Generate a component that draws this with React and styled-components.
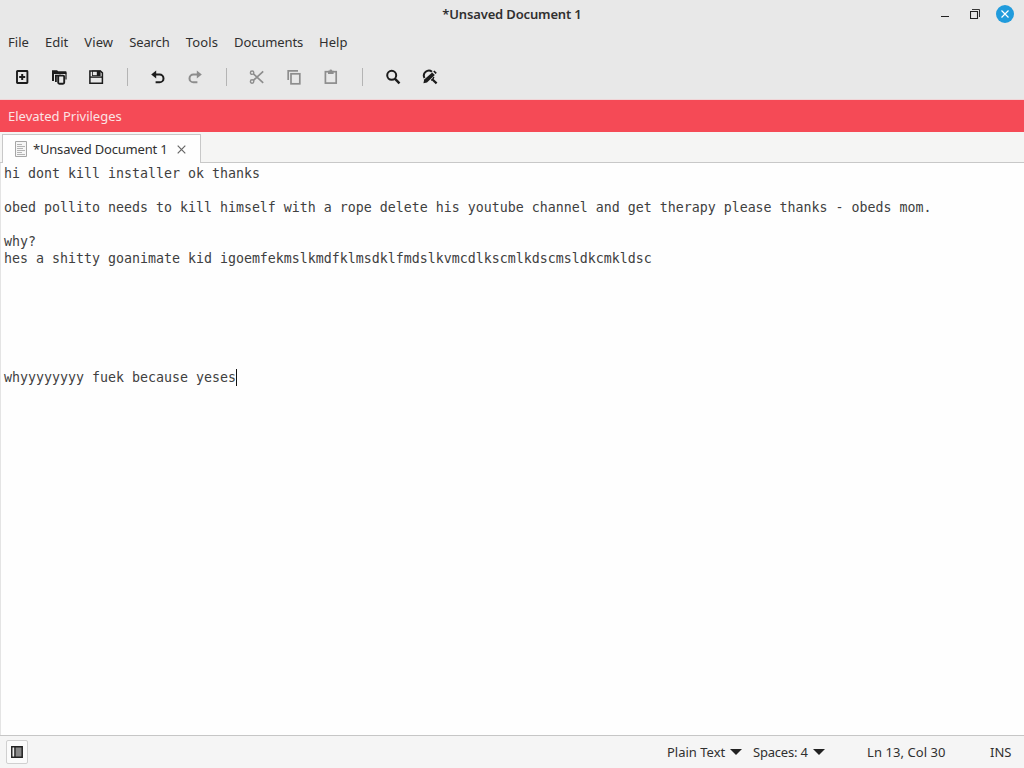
import React from 'react';
import styled, { createGlobalStyle } from 'styled-components';

const GlobalStyle = createGlobalStyle`
    body {
        margin: 0;
        overflow: hidden;
        background: #fefefe;
        color: #303030;
        font-family: "Noto Sans", sans-serif;
        font-size: 13px;
    }
    svg {
        display: block;
        flex: none;
    }
`;

const menus = [
    { label: 'File', gap: 16, spacing: 0.05 },
    { label: 'Edit', gap: 16, spacing: 0 },
    { label: 'View', gap: 16, spacing: 0.1 },
    { label: 'Search', gap: 16, spacing: -0.1 },
    { label: 'Tools', gap: 16, spacing: 0.15 },
    { label: 'Documents', gap: 16, spacing: -0.12 },
    { label: 'Help', gap: 0, spacing: 0 },
];

const text = [
    'hi dont kill installer ok thanks',
    '',
    'obed pollito needs to kill himself with a rope delete his youtube channel and get therapy please thanks - obeds mom.',
    '',
    'why?',
    'hes a shitty goanimate kid igoemfekmslkmdfklmsdklfmdslkvmcdlkscmlkdscmsldkcmkldsc',
    '',
    '',
    '',
    '',
    '',
    '',
    'whyyyyyyyy fuek because yeses',
];

const Icon = ({ children, size = 16 }) => (
    <svg width={size} height={size} viewBox="0 0 16 16" fill="none" stroke="currentColor" strokeWidth="2">
        {children}
    </svg>
);

const NewIcon = () => (
    <Icon>
        <rect x="3" y="2" width="10.4" height="12" rx=".5" strokeWidth="1.9"/>
        <path d="M8.2 5v6M5.2 8h6"/>
    </Icon>
);

const OpenIcon = () => (
    <Icon>
        <path d="M1 12V1.2h5l1.2 1H14.6a1 1 0 0 1 1 1V5H3v7z" fill="currentColor" stroke="none"/>
        <path d="M4.9 13V6.6H10" strokeWidth="1.8"/>
        <path d="M15 4.5v6" strokeWidth="1.2"/>
        <rect x="7.2" y="6.6" width="6" height="8.2" rx="1.2" fill="#e8e8e8" strokeWidth="1.9"/>
    </Icon>
);

const SaveIcon = () => (
    <Icon>
        <path d="M1.9 1.9H12.4L14.4 3.9V14.2H1.9z" strokeWidth="1.5"/>
        <path d="M2 8.1h12" strokeWidth="1.4"/>
        <path d="M4 1.5h8.6v5.6H4z" fill="currentColor" stroke="none"/>
        <path d="M4.8 2.8h4v3.4h-4z" fill="#e8e8e8" stroke="none"/>
    </Icon>
);

const UndoIcon = () => (
    <Icon>
        <path d="M4 5.5H9.6a3.9 3.9 0 0 1 0 7.8H5.6"/>
        <path d="M6.2 1.6v7.8L1.2 5.5z" fill="currentColor" stroke="none"/>
    </Icon>
);

const RedoIcon = () => (
    <Icon>
        <path d="M11 5.5H6.4a3.9 3.9 0 0 0 0 7.8h4"/>
        <path d="M9.8 1.6v7.8l5-3.9z" fill="currentColor" stroke="none"/>
    </Icon>
);

const CutIcon = () => (
    <Icon>
        <path d="M4.4 4.8L14.2 13.8M4.4 11.4L14.2 2.4" strokeWidth="1.7"/>
        <circle cx="3.1" cy="3.7" r="1.7" strokeWidth="1.4"/>
        <circle cx="3.1" cy="12.5" r="1.7" strokeWidth="1.4"/>
    </Icon>
);

const CopyIcon = () => (
    <Icon>
        <path d="M2.2 11V1.9H12" strokeWidth="1.7"/>
        <rect x="5" y="4.8" width="8.8" height="10" strokeWidth="1.7"/>
    </Icon>
);

const PasteIcon = () => (
    <Icon>
        <rect x="2.4" y="2.7" width="10.8" height="11.4" strokeWidth="1.7"/>
        <path d="M5 1.8h1.4a1.4 1.4 0 0 1 2.8 0h1.4v3.2H5z" fill="currentColor" stroke="none"/>
    </Icon>
);

const FindIcon = () => (
    <Icon>
        <circle cx="6.7" cy="6.3" r="4.5"/>
        <path d="M9.8 9.6l4.7 4.7" strokeWidth="2.4"/>
    </Icon>
);

const ReplaceIcon = () => (
    <Icon>
        <path d="M2.5 9A5 5 0 0 1 10 2.7"/>
        <path d="M1.4 14.2l.8-3.6 8-7.2 2.6 2.6-7.8 7.4z" fill="currentColor" stroke="none"/>
        <path d="M11.2 2.6l1.2-1.2 2.4 2.4-1.2 1.2z" fill="currentColor" stroke="none"/>
        <path d="M10.2 10.2l4.4 4.2" strokeWidth="2.2"/>
        <path d="M9.2 11.4a4.6 4.6 0 0 0 2.6-3.6" strokeWidth="1.4"/>
    </Icon>
);

const FileIcon = () => (
    <svg width="12" height="16" viewBox="0 0 12 16" fill="none">
        <path d="M.5.5h11v15H.5z" fill="#f6f6f6" stroke="#a6a6a6"/>
        <path d="M2 3.5h5M2 5.5h8M2 7.5h6M2 9.5h8M2 11.5h5M2 13.5h8" stroke="#b4b4b4"/>
    </svg>
);

const SidePaneIcon = () => (
    <svg width="12" height="12" viewBox="0 0 12 12" fill="none">
        <path d="M.8.8h10.4v10.4H.8z" fill="#888" stroke="#222" strokeWidth="1.5"/>
        <path d="M1.6 1.6h1.7v8.8H1.6z" fill="#eee"/>
        <path d="M4 1v10" stroke="#222" strokeWidth="1.3"/>
    </svg>
);

const Arrow = () => (
    <svg width="12" height="6" viewBox="0 0 12 6">
        <path d="M0 0h12L6 6z" fill="#222"/>
    </svg>
);

export default function App() {
    return (
        <Window>
            <GlobalStyle/>
            <TitleBar>
                <Title>*Unsaved Document 1</Title>
                <Controls>
                    <svg width="8" height="16" viewBox="0 0 8 16"><path d="M0 10.5h8" stroke="#222"/></svg>
                    <svg width="10" height="10" viewBox="0 0 10 10" fill="none" stroke="#222">
                        <path d="M.5 2.5h7v7h-7z" strokeWidth="1.1"/>
                        <path d="M2 .5h7.5V8" strokeWidth=".9"/>
                    </svg>
                    <Close>
                        <svg width="8" height="8" viewBox="0 0 8 8"><path d="M.5.5l7 7m0-7l-7 7" stroke="#fff" strokeWidth="1.2"/></svg>
                    </Close>
                </Controls>
            </TitleBar>
            <MenuBar>
                {menus.map(({ label, gap, spacing }) => (
                    <MenuItem key={label} $gap={gap} $spacing={spacing}>{label}</MenuItem>
                ))}
            </MenuBar>
            <ToolBar>
                <Tool><NewIcon/></Tool>
                <Tool><OpenIcon/></Tool>
                <Tool><SaveIcon/></Tool>
                <Separator/>
                <Tool><UndoIcon/></Tool>
                <Tool disabled><RedoIcon/></Tool>
                <Separator/>
                <Tool disabled><CutIcon/></Tool>
                <Tool disabled><CopyIcon/></Tool>
                <Tool disabled><PasteIcon/></Tool>
                <Separator/>
                <Tool><FindIcon/></Tool>
                <Tool><ReplaceIcon/></Tool>
            </ToolBar>
            <Warning>Elevated Privileges</Warning>
            <TabBar>
                <Tab>
                    <FileIcon/>
                    <TabLabel>*Unsaved Document 1</TabLabel>
                    <svg width="9" height="9" viewBox="0 0 9 9"><path d="M.7.7l7.6 7.6m0-7.6L.7 8.3" stroke="#666" strokeWidth="1.2"/></svg>
                </Tab>
            </TabBar>
            <Editor>
                {text.map((line, i) => (
                    <Line key={i}>{line}{i === text.length - 1 && <Caret/>}</Line>
                ))}
            </Editor>
            <StatusBar>
                <PaneButton><SidePaneIcon/></PaneButton>
                <Status $width={86}>Plain Text <Arrow/></Status>
                <Status $width={114} $spacing={-0.2}>Spaces: 4 <Arrow/></Status>
                <Status $width={123} $spacing={0.07}>Ln 13, Col 30</Status>
                <Status $width={34}>INS</Status>
            </StatusBar>
        </Window>
    );
}

const Window = styled.div`
    display: flex;
    flex-direction: column;
    height: 768px;
`;

const TitleBar = styled.div`
    display: grid;
    grid-template-columns: 1fr auto 1fr;
    align-items: center;
    height: 28px;
    padding-right: 10px;
    background: #e8e8e8;
`;

const Title = styled.div`
    grid-column: 2;
    margin-right: -10px;
    font-weight: 600;
    letter-spacing: -0.15px;
`;

const Controls = styled.div`
    display: flex;
    justify-content: flex-end;
    align-items: center;
    gap: 21px;

    > :last-child {
        margin-left: -5px;
    }
`;

const Close = styled.div`
    display: flex;
    align-items: center;
    justify-content: center;
    width: 18px;
    height: 18px;
    border-radius: 50%;
    background: #209bdc;
`;

const MenuBar = styled.div`
    display: flex;
    align-items: center;
    height: 27px;
    padding-left: 8px;
    background: #e8e8e8;
`;

const MenuItem = styled.div`
    margin-right: ${({ $gap }) => $gap}px;
    letter-spacing: ${({ $spacing }) => $spacing}px;
`;

const ToolBar = styled.div`
    display: flex;
    align-items: center;
    box-sizing: border-box;
    height: 45px;
    padding: 0 0 1px 3px;
    border-bottom: 1px solid #f0d4d6;
    background: #e8e8e8;
`;

const Tool = styled.button`
    display: flex;
    align-items: center;
    justify-content: center;
    width: 37px;
    height: 32px;
    padding: 0;
    border: 0;
    background: none;
    color: ${({ disabled }) => disabled ? '#8d8d8d' : '#1c1c1c'};
`;

const Separator = styled.div`
    width: 1px;
    height: 18px;
    margin: 0 11px 0 13px;
    background: #b4b4b4;
`;

const Warning = styled.div`
    height: 32px;
    padding-left: 8px;
    line-height: 33px;
    background: #f54a56;
    color: #fbe3e4;
`;

const TabBar = styled.div`
    display: flex;
    box-sizing: border-box;
    height: 31px;
    padding: 2px 0 0 2px;
    border-bottom: 1px solid #c8c8c8;
    background: #f5f5f4;
`;

const Tab = styled.div`
    display: flex;
    align-items: center;
    box-sizing: border-box;
    width: 199px;
    height: 29px;
    padding-left: 12px;
    border: 1px solid #c8c8c8;
    border-bottom: 0;
    background: #fefefe;
`;

const TabLabel = styled.span`
    width: 136px;
    margin: 0 8px 0 6px;
    letter-spacing: -0.2px;
    white-space: nowrap;
`;

const Editor = styled.div`
    flex: 1;
    padding: 2px 0 0 3px;
    border-left: 1px solid #e4e4e4;
    font-family: "DejaVu Sans Mono", monospace;
    font-size: 13.295px;
    color: #404040;
`;

const Line = styled.div`
    display: flex;
    height: 17px;
    line-height: 17px;
    white-space: pre;
`;

const Caret = styled.span`
    width: 1px;
    height: 17px;
    background: #111;
`;

const StatusBar = styled.div`
    display: flex;
    align-items: center;
    box-sizing: border-box;
    height: 33px;
    padding-left: 6px;
    border-top: 1px solid #c6c6c6;
    background: #f5f5f5;
`;

const PaneButton = styled.div`
    display: flex;
    align-items: center;
    justify-content: center;
    box-sizing: border-box;
    width: 22px;
    height: 24px;
    margin-right: auto;
    border: 1px solid #d0d0d0;
    border-radius: 2px;
    background: #fbfbfb;
`;

const Status = styled.div`
    display: flex;
    align-items: center;
    gap: 5px;
    width: ${({ $width }) => $width}px;
    letter-spacing: ${({ $spacing = 0 }) => $spacing}px;
    white-space: nowrap;
`;
